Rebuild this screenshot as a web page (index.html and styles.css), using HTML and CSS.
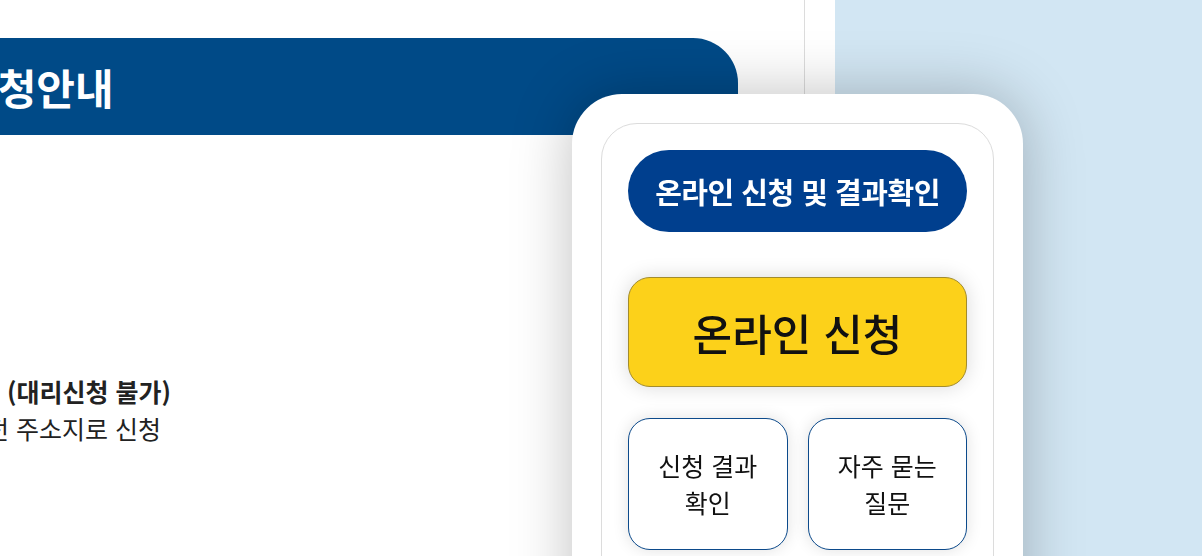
FILE: index.html
```html
<!DOCTYPE html>
<html lang="ko">
<head>
<meta charset="utf-8">
<title>신청안내</title>
<link rel="stylesheet" href="styles.css">
</head>
<body>
  <div class="page">
    <main class="content">
      <h2 class="title-bar">신청안내</h2>
      <div class="info">
        <p class="info-line strong">신청자 본인만 신청 가능 (대리신청 불가)</p>
        <p class="info-line sub">주민등록표상 전입 이전 주소지로 신청</p>
      </div>
    </main>
  </div>
  <aside class="quick">
    <div class="quick-inner">
      <a class="pill-btn" href="#">온라인 신청 및 결과확인</a>
      <a class="apply-btn" href="#">온라인 신청</a>
      <div class="sub-grid">
        <a class="sub-btn" href="#">신청 결과<br>확인</a>
        <a class="sub-btn" href="#">자주 묻는<br>질문</a>
      </div>
    </div>
  </aside>
</body>
</html>
```

FILE: styles.css
```css
* { box-sizing: border-box; }
html, body { margin: 0; padding: 0; }
body {
  background: #d2e6f3;
  font-family: "Noto Sans CJK KR", "Noto Sans", sans-serif;
  overflow: hidden;
  height: 556px;
}
a { text-decoration: none; color: inherit; }
p { margin: 0; }

.page {
  width: 1135px;
  margin-left: -300px;
  background: #fff;
  height: 556px;
}
.content {
  width: 1105px;
  height: 100%;
  padding-top: 38px;
  border-right: 1px solid #dcdcdc;
}
.title-bar {
  margin: 0;
  width: 1038px;
  height: 97px;
  background: #004a87;
  border-radius: 0 45px 0 0;
  color: #fff;
  font-size: 42px;
  font-weight: 700;
  display: flex;
  align-items: center;
  padding-left: 259px;
}
.info {
  margin-top: 238px;
  padding-left: 49px;
  color: #222;
  font-size: 25px;
  line-height: 37px;
}
.info-line.strong { font-weight: 700; }
.info-line.sub { padding-left: 16px; }

.quick {
  position: fixed;
  left: 572px;
  top: 94px;
  width: 451px;
  height: 560px;
  padding: 29px;
  background: #fff;
  border-radius: 50px;
  box-shadow: 0 0 60px rgba(0, 0, 0, 0.25);
}
.quick-inner {
  height: 100%;
  border: 1px solid #dcdcdc;
  border-radius: 36px;
  padding: 26px;
  display: flex;
  flex-direction: column;
}
.pill-btn {
  height: 82px;
  border-radius: 41px;
  background: #003f8e;
  color: #fff;
  font-size: 29px;
  font-weight: 700;
  display: flex;
  align-items: center;
  justify-content: center;
  letter-spacing: -0.5px;
}
.apply-btn {
  margin-top: 45px;
  height: 110px;
  border-radius: 22px;
  background: #fcd11a;
  border: 1px solid #a38c2c;
  color: #111;
  font-size: 43px;
  font-weight: 500;
  display: flex;
  align-items: center;
  justify-content: center;
  box-shadow: 0 0 20px rgba(0, 0, 0, 0.15);
}
.sub-grid {
  margin-top: 31px;
  display: grid;
  grid-template-columns: 1fr 1fr;
  gap: 20px;
}
.sub-btn {
  height: 132px;
  border: 1px solid #0c4a8b;
  border-radius: 22px;
  background: #fff;
  color: #111;
  font-size: 25px;
  line-height: 37px;
  display: flex;
  align-items: center;
  justify-content: center;
  text-align: center;
  box-shadow: 0 0 16px rgba(0, 0, 0, 0.12);
}
```
